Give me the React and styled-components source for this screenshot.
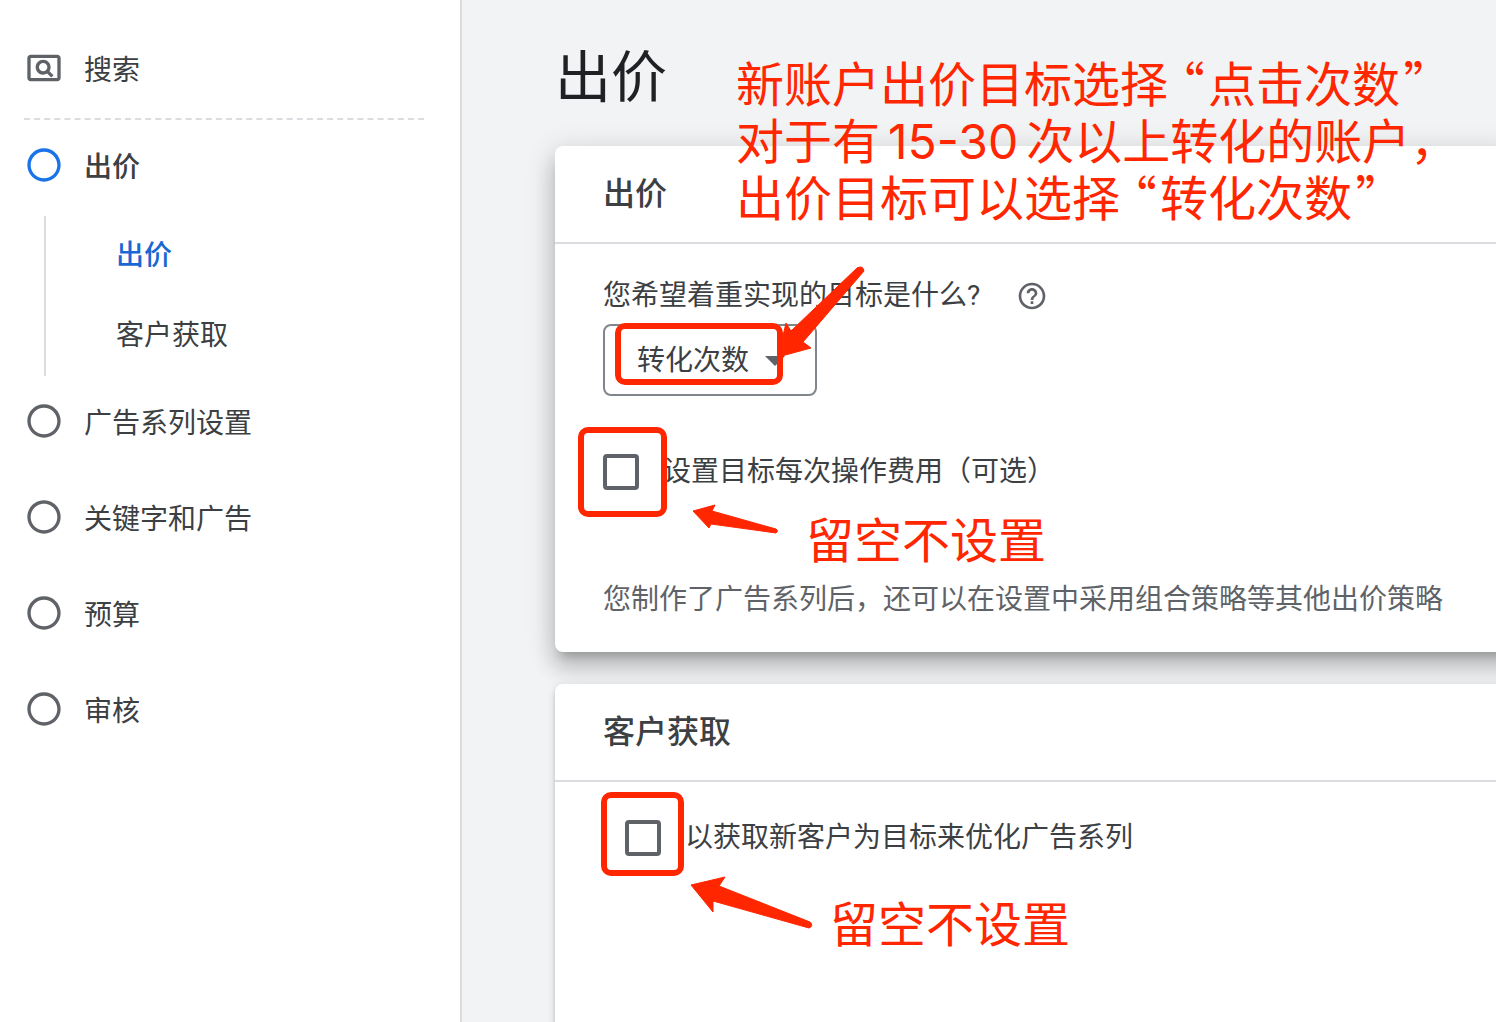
import styled, { createGlobalStyle } from "styled-components"
import {
   MdHelpOutline,
   MdOutlinePageview,
   MdRadioButtonUnchecked,
} from "react-icons/md"

const Colors = {
   Text: "#3c4043",
   Title: "#202124",
   Muted: "#5f6368",
   Border: "#dadce0",
   Background: "#f1f3f4",
   Primary: "#1a73e8",
   PrimaryDark: "#1967d2",
   Mark: "#ff2600",
}

const GlobalStyle = createGlobalStyle`
   *, *::before, *::after {
      box-sizing: border-box;
   }

   body {
      margin: 0;
      color: ${Colors.Text};
      background-color: ${Colors.Background};
      font-family: Roboto, "Noto Sans CJK SC", sans-serif;
      font-size: 28px;
      line-height: 40px;
   }
`

const Page = styled.div`
   display: flex;
   min-height: 100vh;
   overflow: hidden;
`

const Sidebar = styled.nav`
   flex: 0 0 462px;
   padding: 24px 36px 0 24px;
   background-color: white;
   border-right: 2px solid ${Colors.Border};
`

const Step = styled.a`
   display: flex;
   align-items: center;
   column-gap: 20px;
   height: 96px;
   color: ${Colors.Text};
   font-weight: ${(props) => (props.$active ? 500 : 400)};
   text-decoration: none;
   border-bottom: ${(props) =>
      props.$divider ? `2px dashed ${Colors.Border}` : "none"};

   svg {
      margin-bottom: 6px;
      color: ${(props) => (props.$active ? Colors.Primary : Colors.Muted)};
   }
`

const SubSteps = styled.div`
   display: flex;
   flex-direction: column;
   margin-left: 20px;
   padding-left: 70px;
   border-left: 2px solid ${Colors.Border};
`

const SubStep = styled.a`
   padding: 20px 0;
   color: ${(props) => (props.$active ? Colors.PrimaryDark : Colors.Text)};
   font-weight: ${(props) => (props.$active ? 500 : 400)};
   text-decoration: none;
`

const Main = styled.main`
   position: relative;
   flex: 1;
   min-width: 0;
   display: flex;
   flex-direction: column;
   row-gap: 28px;
   padding: 38px 0 0 93px;
`

const Title = styled.h1`
   margin: 0;
   color: ${Colors.Title};
   font-size: 56px;
   font-weight: 400;
   line-height: 80px;
`

const Cards = styled.div`
   flex: 1 0 auto;
   display: flex;
   flex-direction: column;
   row-gap: 32px;
   margin: 0 -32px -32px 0;
`

const Card = styled.section`
   position: relative;
   flex: ${(props) => (props.$grow ? "1 0 auto" : "none")};
   background-color: white;
   border-radius: 8px;
   box-shadow: ${(props) =>
      props.$raised
         ? "0 10px 10px -6px rgba(0, 0, 0, 0.2), 0 16px 20px 2px rgba(0, 0, 0, 0.14), 0 6px 28px 4px rgba(0, 0, 0, 0.12)"
         : "0 6px 2px -4px rgba(0, 0, 0, 0.2), 0 4px 4px rgba(0, 0, 0, 0.14), 0 2px 10px rgba(0, 0, 0, 0.12)"};
`

const CardHeader = styled.h2`
   margin: 0;
   padding: 24px 48px;
   font-size: 32px;
   font-weight: 500;
   line-height: 48px;
   border-bottom: 2px solid ${Colors.Border};
`

const CardBody = styled.div`
   display: flex;
   flex-direction: column;
   align-items: flex-start;
   padding: 32px 0 32px 48px;
`

const Question = styled.div`
   display: flex;
   align-items: center;
   column-gap: 36px;
   margin-bottom: 8px;
`

const HelpButton = styled.button`
   display: flex;
   padding: 0;
   color: ${Colors.Muted};
   background: none;
   border: none;
`

const SelectBox = styled.div`
   position: relative;
   margin-bottom: 58px;
`

const Select = styled.select`
   appearance: none;
   width: 214px;
   height: 72px;
   padding: 2px 32px 0;
   color: inherit;
   font: inherit;
   background-color: white;
   border: 2px solid #80868b;
   border-radius: 8px;
`

const Caret = styled.span`
   position: absolute;
   top: 32px;
   right: 32px;
   border: 10px solid transparent;
   border-top-color: ${Colors.Muted};
   border-bottom: none;
   pointer-events: none;
`

const CheckLabel = styled.label`
   display: flex;
   align-items: center;
   column-gap: 24px;
   height: 36px;
   white-space: nowrap;
   margin: ${(props) => (props.$nested ? "6px 0 0 22px" : "0")};
`

const Checkbox = styled.input`
   appearance: none;
   width: 36px;
   height: 36px;
   margin: 0;
   border: 4px solid ${Colors.Muted};
   border-radius: 4px;
`

const Hint = styled.p`
   margin: 90px 0 0;
   color: ${Colors.Muted};
   white-space: nowrap;
`

// Hand-drawn marks laid over the form
const Frame = styled.div`
   position: absolute;
   left: ${(props) => props.$x}px;
   top: ${(props) => props.$y}px;
   width: ${(props) => props.$w}px;
   height: ${(props) => props.$h}px;
   border: 6px solid ${Colors.Mark};
   border-radius: 10px;
   pointer-events: none;
`

const ArrowSvg = styled.svg`
   position: absolute;
   left: ${(props) => props.$x}px;
   top: ${(props) => props.$y}px;
   fill: ${Colors.Mark};
   stroke: ${Colors.Mark};
   stroke-linejoin: round;
   pointer-events: none;
`

const Note = styled.p`
   position: absolute;
   left: ${(props) => props.$x}px;
   top: ${(props) => props.$y}px;
   margin: 0;
   color: ${Colors.Mark};
   font-family: Inter, "Noto Sans CJK SC", sans-serif;
   font-size: 48px;
   line-height: 57px;
   white-space: nowrap;
   pointer-events: none;
`

const Digits = styled.span`
   margin: 0 8px;
`

const Quoted = styled.q`
   quotes: "“" "”";

   &::before,
   &::after {
      font-family: "Noto Sans CJK SC", sans-serif;
      font-feature-settings: "palt";
      line-height: 1px;
   }

   &::before {
      margin: 0 4px 0 12px;
   }

   &::after {
      margin-left: 4px;
   }
`

function Arrow({ x, y, width, height, d }) {
   return (
      <ArrowSvg $x={x} $y={y} width={width} height={height} aria-hidden="true">
         <path d={d} />
      </ArrowSvg>
   )
}

const steps = ["广告系列设置", "关键字和广告", "预算", "审核"]

export default function App() {
   return (
      <Page lang="zh-CN">
         <GlobalStyle />

         <Sidebar>
            <Step href="#search" $divider>
               <MdOutlinePageview size={40} />
               搜索
            </Step>
            <Step href="#bidding" $active>
               <MdRadioButtonUnchecked size={40} />
               出价
            </Step>
            <SubSteps>
               <SubStep href="#bidding" $active>
                  出价
               </SubStep>
               <SubStep href="#acquisition">客户获取</SubStep>
            </SubSteps>
            {steps.map((step) => (
               <Step key={step} href="#next">
                  <MdRadioButtonUnchecked size={40} />
                  {step}
               </Step>
            ))}
         </Sidebar>

         <Main>
            <Title>出价</Title>

            <Cards>
               <Card id="bidding" $raised>
                  <CardHeader>出价</CardHeader>
                  <CardBody>
                     <Question>
                        <label htmlFor="goal">您希望着重实现的目标是什么?</label>
                        <HelpButton type="button" aria-label="帮助">
                           <MdHelpOutline size={32} />
                        </HelpButton>
                     </Question>
                     <SelectBox>
                        <Select id="goal">
                           <option>转化次数</option>
                        </Select>
                        <Caret />
                     </SelectBox>
                     <CheckLabel>
                        <Checkbox type="checkbox" />
                        设置目标每次操作费用（可选）
                     </CheckLabel>
                     <Hint>
                        您制作了广告系列后，还可以在设置中采用组合策略等其他出价策略
                     </Hint>
                  </CardBody>

                  <Frame $x={60} $y={177} $w={168} $h={62} />
                  <Frame $x={23} $y={281} $w={89} $h={90} />
                  <Arrow
                     x={221}
                     y={118}
                     width={92}
                     height={98}
                     d="M2 93 L10 59 L15 67 L81 4 Q87 1 88 7 L27 78 L35 84 Z"
                  />
                  <Arrow
                     x={136}
                     y={356}
                     width={90}
                     height={32}
                     d="M2 9 L24 3 L21 9 L85 27 Q88 29 85 31 L20 22 L18 26 Z"
                  />
                  <Note $x={251} $y={366}>
                     留空不设置
                  </Note>
               </Card>

               <Card id="acquisition" $grow>
                  <CardHeader>客户获取</CardHeader>
                  <CardBody>
                     <CheckLabel $nested>
                        <Checkbox type="checkbox" />
                        以获取新客户为目标来优化广告系列
                     </CheckLabel>
                  </CardBody>

                  <Frame $x={46} $y={108} $w={83} $h={84} />
                  <Arrow
                     x={133}
                     y={190}
                     width={126}
                     height={58}
                     d="M3 11 L37 3 L31 12 L122 48 Q126 52 121 54 L25 27 L25 38 Z"
                  />
                  <Note $x={275} $y={212}>
                     留空不设置
                  </Note>
               </Card>
            </Cards>

            <Note $x={274} $y={56}>
               新账户出价目标选择<Quoted>点击次数</Quoted>
               <br />
               对于有<Digits>15-30</Digits>次以上转化的账户，
               <br />
               出价目标可以选择<Quoted>转化次数</Quoted>
            </Note>
         </Main>
      </Page>
   )
}
